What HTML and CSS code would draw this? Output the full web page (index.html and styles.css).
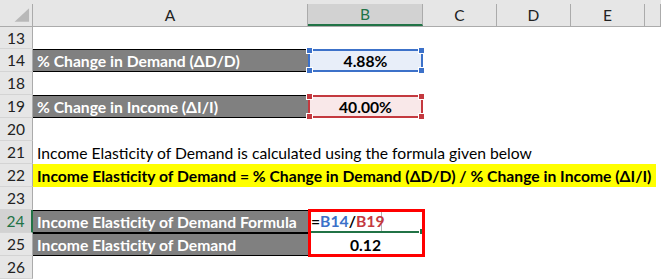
FILE: index.html
```html
<!DOCTYPE html>
<html>
<head>
<meta charset="utf-8">
<link rel="stylesheet" href="styles.css">
</head>
<body>
<div class="sheet">
  <div class="hrow">
    <div class="corner"><svg width="33" height="22" viewBox="0 0 33 22"><polygon points="15,18 30,4 30,18" fill="#b8b8b8"/></svg></div>
    <div class="ch">A</div>
    <div class="ch sel">B</div>
    <div class="ch">C</div>
    <div class="ch">D</div>
    <div class="ch">E</div>
    <div class="ch">&nbsp;</div>
  </div>

  <div class="row"><div class="rn">13</div><div class="c"></div><div class="c"></div><div class="c"></div><div class="c"></div><div class="c"></div><div class="c"></div></div>

  <div class="row">
    <div class="rn">14</div>
    <div class="c dark">% Change in Demand (ΔD/D)</div>
    <div class="c val ref blue">4.88%<span class="h tl"></span><span class="h tr"></span><span class="h bl"></span><span class="h br"></span></div>
    <div class="c"></div><div class="c"></div><div class="c"></div><div class="c"></div>
  </div>

  <div class="row"><div class="rn">18</div><div class="c"></div><div class="c"></div><div class="c"></div><div class="c"></div><div class="c"></div><div class="c"></div></div>

  <div class="row">
    <div class="rn">19</div>
    <div class="c dark">% Change in Income (ΔI/I)</div>
    <div class="c val ref red">40.00%<span class="h tl"></span><span class="h tr"></span><span class="h bl"></span><span class="h br"></span></div>
    <div class="c"></div><div class="c"></div><div class="c"></div><div class="c"></div>
  </div>

  <div class="row"><div class="rn">20</div><div class="c"></div><div class="c"></div><div class="c"></div><div class="c"></div><div class="c"></div><div class="c"></div></div>

  <div class="row">
    <div class="rn">21</div>
    <div class="c text">Income Elasticity of Demand is calculated using the formula given below</div>
    <div class="c"></div><div class="c"></div><div class="c"></div><div class="c"></div><div class="c"></div>
  </div>

  <div class="row">
    <div class="rn">22</div>
    <div class="c yellow">Income Elasticity of Demand = % Change in Demand (ΔD/D) / % Change in Income (ΔI/I)</div>
  </div>

  <div class="row"><div class="rn">23</div><div class="c"></div><div class="c"></div><div class="c"></div><div class="c"></div><div class="c"></div><div class="c"></div></div>

  <div class="row">
    <div class="rn active">24</div>
    <div class="c dark top">Income Elasticity of Demand Formula</div>
    <div class="c edit"><span class="editor"><span class="k">=</span><span class="bl-t">B14</span><span class="k">/</span><span class="rd-t">B19</span></span><span class="fill"></span></div>
    <div class="c"></div><div class="c"></div><div class="c"></div><div class="c"></div>
  </div>

  <div class="row">
    <div class="rn">25</div>
    <div class="c dark">Income Elasticity of Demand</div>
    <div class="c val">0.12</div>
    <div class="c"></div><div class="c"></div><div class="c"></div><div class="c"></div>
  </div>

  <div class="row"><div class="rn">26</div><div class="c"></div><div class="c"></div><div class="c"></div><div class="c"></div><div class="c"></div><div class="c"></div></div>

  <div class="redbox"></div>
</div>
</body>
</html>
```

FILE: styles.css
```css
html, body {
  margin: 0;
  padding: 0;
  background: #ffffff;
}
body {
  font-family: "Lato", "Open Sans", sans-serif;
  font-size: 15.7px;
  color: #000;
  width: 661px;
  height: 280px;
  overflow: hidden;
}
.sheet {
  position: relative;
  width: 661px;
}
.hrow, .row {
  display: grid;
  grid-template-columns: 33px 275px 115px 74px 74px 74px 16px;
}
.hrow {
  height: 22px;
  padding-top: 4px;
  background: #e6e6e6;
  border-bottom: 1px solid #ababab;
  box-sizing: content-box;
}
.corner {
  border-right: 1px solid #ababab;
  box-sizing: border-box;
  display: flex;
}
.ch {
  display: flex;
  align-items: center;
  justify-content: center;
  border-right: 1px solid #ababab;
  box-sizing: border-box;
  color: #222;
  font-size: 15.5px;
}
.ch.sel {
  background: #d2d2d2;
  color: #217346;
  border-bottom: 2px solid #217346;
}
.row {
  height: 23px;
}
.row:nth-child(2) { height: 22px; }
.rn {
  background: #e6e6e6;
  border-right: 1px solid #ababab;
  border-bottom: 1px solid #d4d4d4;
  box-sizing: border-box;
  display: flex;
  align-items: center;
  justify-content: center;
  color: #222;
  font-size: 15.5px;
}
.rn.active {
  background: #d2d2d2;
  color: #217346;
  border-right: 2px solid #217346;
}
.c {
  box-sizing: border-box;
  display: flex;
  align-items: center;
  white-space: nowrap;
  min-width: 0;
}
.dark {
  background: #808080;
  color: #ffffff;
  font-weight: bold;
  padding-left: 4px;
  border-bottom: 1px solid #000;
  border-top: 1px solid #000;
}
.row:nth-child(12) .dark { border-top: none; }
.val {
  justify-content: center;
  font-weight: bold;
}
.ref {
  position: relative;
  border: 2px solid;
}
.ref.blue {
  background: #e8eef9;
  border-color: #3c71c9;
}
.ref.red {
  background: #f9e8e9;
  border-color: #c4393f;
}
.h {
  position: absolute;
  width: 5px;
  height: 5px;
  border: 1px solid #fff;
}
.blue .h { background: #3c71c9; }
.red .h { background: #c4393f; }
.h.tl { left: -4px; top: -4px; }
.h.tr { right: -4px; top: -4px; }
.h.bl { left: -4px; bottom: -4px; }
.h.br { right: -4px; bottom: -4px; }
.text {
  padding-left: 4px;
  overflow: visible;
}
.yellow {
  grid-column: 2 / span 6;
  width: 623px;
  background: #ffff00;
  font-weight: bold;
  padding-left: 4px;
}
.edit {
  position: relative;
  font-weight: bold;
  border-bottom: 2px solid #217346;
}
.editor {
  display: flex;
  align-items: center;
  height: 21px;
  padding-left: 3px;
  padding-right: 2px;
  width: 74px;
  box-sizing: border-box;
  border-right: 1px solid #b0b0b0;
}
.k { color: #000; }
.bl-t { color: #3c71c9; }
.rd-t { color: #c4393f; }
.fill {
  position: absolute;
  right: -3px;
  bottom: -4px;
  width: 5px;
  height: 5px;
  background: #217346;
  border: 1px solid #fff;
}
.redbox {
  position: absolute;
  left: 308px;
  top: 209px;
  width: 117px;
  height: 48px;
  border: 3px solid #ff0000;
  box-sizing: border-box;
}
```
